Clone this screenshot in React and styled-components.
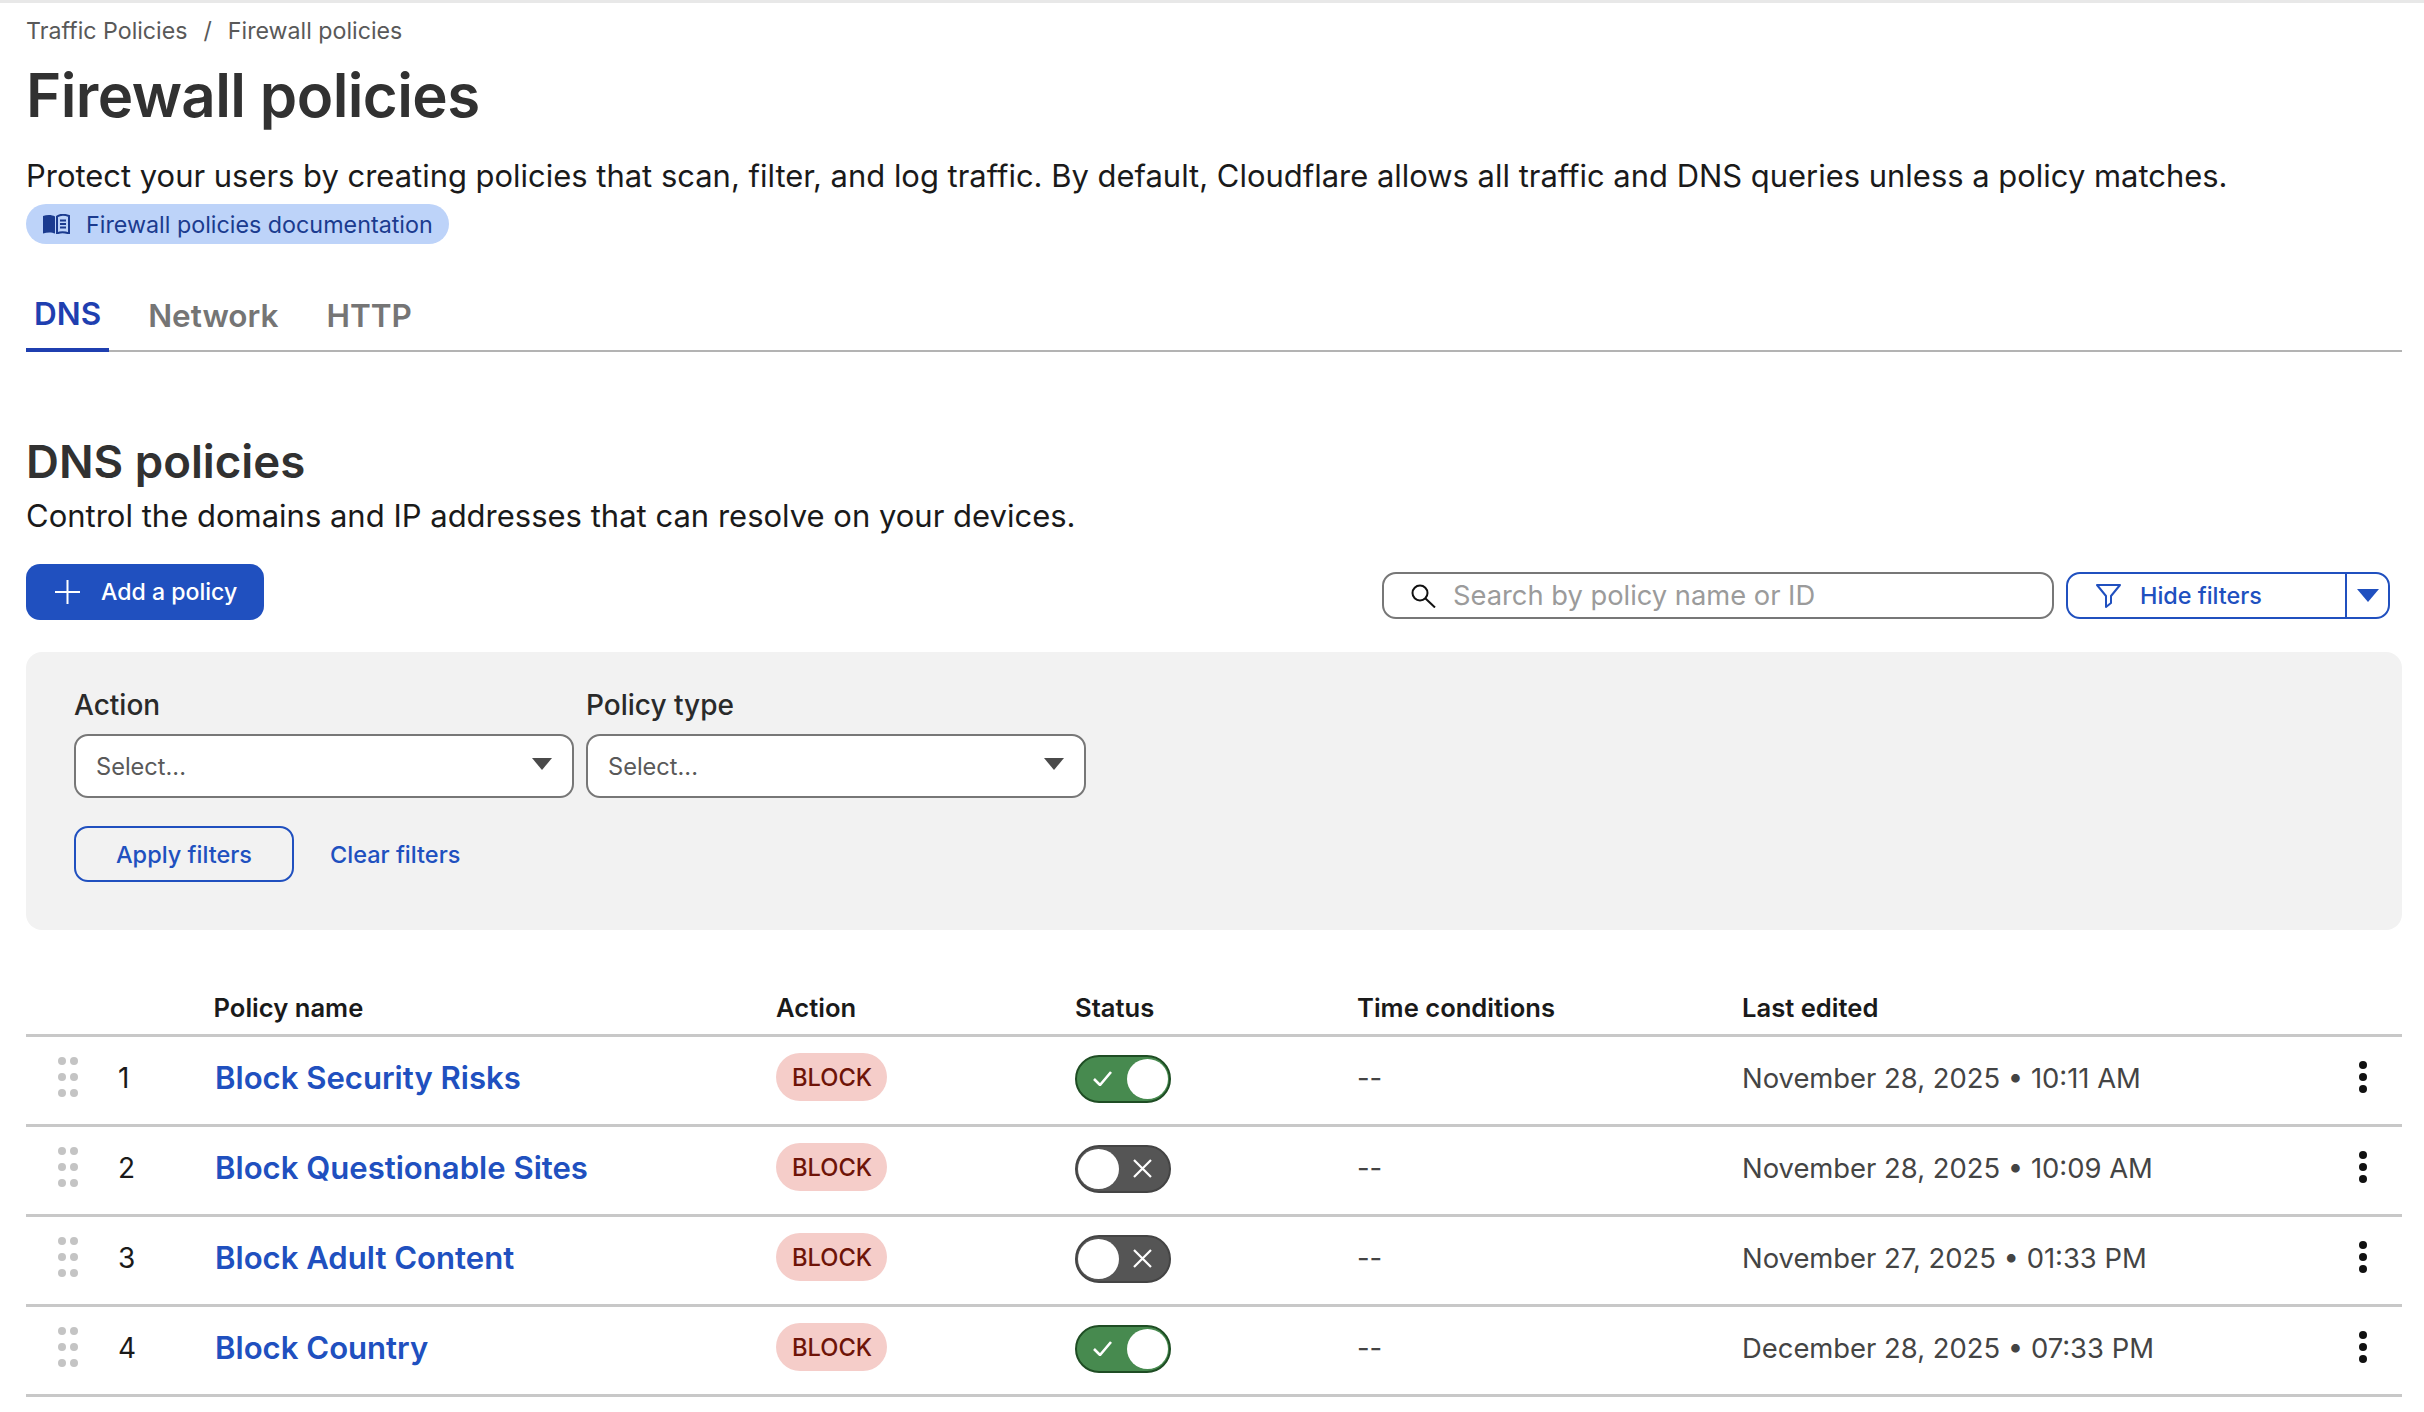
import React from "react";
import styled, { createGlobalStyle } from "styled-components";

const Global = createGlobalStyle`
  html, body { margin: 0; padding: 0; background: #fff; }
  body { font-family: Inter, "Liberation Sans", sans-serif; color: #313131; }
  * { box-sizing: border-box; }
`;

const Page = styled.div`
  width: 2424px;
  height: 1412px;
  overflow: hidden;
  padding: 0 22px 0 26px;
  border-top: 3px solid #e8e8e8;
`;
const Crumbs = styled.nav`
  display: flex;
  gap: 16px;
  height: 54px;
  padding-top: 13px;
  font-size: 23.2px;
  line-height: 30px;
  color: #595959;
`;
const Title = styled.h1`
  margin: 0;
  height: 70px;
  padding-top: 3px;
  font-size: 60px;
  line-height: 70px;
  font-weight: 600;
  letter-spacing: -0.6px;
  color: #313131;
`;
const Lead = styled.p`
  margin: 0;
  padding-top: 28px;
  height: 77px;
  font-size: 30.95px;
  line-height: 42px;
  color: #1a1a1a;
`;
const DocPill = styled.a`
  display: inline-flex;
  align-items: center;
  gap: 16px;
  height: 40px;
  padding: 0 16px;
  border-radius: 20px;
  background: #bdd3f9;
  color: #1b3b8f;
  font-size: 23.3px;
`;
const Tabs = styled.div`
  display: flex;
  height: 108px;
  padding-top: 46px;
  border-bottom: 2px solid #b3b3b3;
`;
const Tab = styled.div`
  height: 62px;
  padding: 0 8px;
  margin-right: ${(p) => (p.$active ? "31px" : "32px")};
  font-size: 31.5px;
  line-height: ${(p) => (p.$active ? "48px" : "52px")};
  font-weight: 600;
  color: ${(p) => (p.$active ? "#1f3fb0" : "#757575")};
  border-bottom: ${(p) => (p.$active ? "4px solid #1f3fb0" : "0")};
`;
const Heading = styled.h2`
  margin: 79px 0 0;
  height: 62px;
  font-size: 45.6px;
  line-height: 62px;
  font-weight: 600;
  color: #313131;
`;
const Sub = styled.p`
  margin: 0;
  height: 46px;
  font-size: 31px;
  line-height: 46px;
  color: #1a1a1a;
`;
const Toolbar = styled.div`
  display: flex;
  align-items: flex-start;
  height: 88px;
  margin-top: 25px;
  padding-right: 12px;
`;
const AddButton = styled.button`
  display: flex;
  align-items: center;
  gap: 21px;
  width: 238px;
  height: 56px;
  padding: 0 0 0 29px;
  border: 0;
  border-radius: 14px;
  background: #2050bf;
  color: #fff;
  white-space: nowrap;
  font: 500 23.1px Inter, sans-serif;
`;
const SearchBox = styled.div`
  display: flex;
  align-items: center;
  gap: 16px;
  width: 672px;
  height: 47px;
  margin: 8px 0 0 auto;
  padding: 0 24px 0 27px;
  border: 2px solid #777;
  border-radius: 14px;
  color: #9b9b9b;
  font-size: 27.3px;
`;
const SplitButton = styled.div`
  display: flex;
  width: 324px;
  height: 47px;
  margin: 8px 0 0 12px;
  border: 2px solid #2050bf;
  border-radius: 14px;
  color: #2050bf;
  font-size: 23.4px;
  font-weight: 500;
`;
const SplitMain = styled.div`
  flex: 1;
  display: flex;
  align-items: center;
  gap: 19px;
  padding-left: 28px;
  border-right: 2px solid #2050bf;
`;
const SplitCaret = styled.div`
  width: 41px;
  display: flex;
  align-items: center;
  justify-content: center;
`;
const Panel = styled.section`
  height: 278px;
  padding: 34px 48px 0;
  border-radius: 16px;
  background: #f2f2f2;
`;
const FieldRow = styled.div`
  display: flex;
  gap: 12px;
`;
const Field = styled.div`
  width: 500px;
`;
const FieldLabel = styled.div`
  height: 48px;
  font-size: 28px;
  line-height: 38px;
  font-weight: 500;
  color: #2a2a2a;
`;
const SelectBox = styled.div`
  display: flex;
  align-items: center;
  justify-content: space-between;
  height: 64px;
  padding: 0 20px 0 20px;
  border: 2px solid #777;
  border-radius: 14px;
  background: #fff;
  color: #595959;
  font-size: 23.6px;
`;
const SelectCaret = styled.span`
  display: flex;
  margin-top: -5px;
`;
const PanelActions = styled.div`
  display: flex;
  align-items: center;
  gap: 36px;
  margin-top: 28px;
`;
const OutlineButton = styled.button`
  width: 220px;
  height: 56px;
  border: 2px solid #2050bf;
  border-radius: 14px;
  background: transparent;
  color: #2050bf;
  font: 500 23.5px Inter, sans-serif;
`;
const TextLink = styled.a`
  color: #2050bf;
  font-size: 23.5px;
  font-weight: 500;
`;
const columns = "92px 98px 560px 299px 282px 385px 1fr 78px";
const HeadRow = styled.div`
  display: grid;
  grid-template-columns: ${columns};
  align-items: center;
  height: 107px;
  padding-top: 50px;
  border-bottom: 3px solid #c8c8c8;
  font-size: 25.6px;
  font-weight: 600;
  color: #1a1a1a;
`;
const HeadName = styled.div`
  margin-left: -2.5px;
`;
const Row = styled.div`
  display: grid;
  grid-template-columns: ${columns};
  align-items: center;
  height: 90px;
  padding-bottom: 5px;
  border-bottom: 3px solid #c8c8c8;
`;
const Grip = styled.div`
  display: grid;
  grid-template-columns: 8px 8px;
  gap: 8px 4px;
  width: 20px;
  margin-left: 32px;
  margin-top: -3px;
`;
const GripDot = styled.span`
  width: 8px;
  height: 8px;
  border-radius: 50%;
  background: #c4c4c4;
`;
const Num = styled.div`
  font-size: 28px;
  color: #1a1a1a;
`;
const PolicyLink = styled.a`
  margin-left: -1px;
  font-size: 31.1px;
  font-weight: 600;
  color: #2050bf;
`;
const Badge = styled.span`
  display: inline-flex;
  align-items: center;
  justify-content: center;
  width: 111px;
  height: 48px;
  margin-top: -2px;
  padding-left: 1px;
  border-radius: 24px;
  background: #f5cdc9;
  color: #6e1408;
  font-size: 23.7px;
  font-weight: 500;
`;
const Toggle = styled.div`
  display: flex;
  flex-direction: ${(p) => (p.$on ? "row" : "row-reverse")};
  align-items: center;
  justify-content: space-between;
  width: 96px;
  height: 48px;
  margin-top: 1px;
  padding: 0 ${(p) => (p.$on ? "1px" : "17px")} 0 ${(p) => (p.$on ? "16px" : "1px")};
  border: 2px solid ${(p) => (p.$on ? "#1f4d24" : "#444")};
  border-radius: 24px;
  background: ${(p) => (p.$on ? "#478a4f" : "#555")};
`;
const Knob = styled.span`
  width: 41px;
  height: 40px;
  border-radius: 50%;
  background: #fff;
`;
const Dim = styled.div`
  font-size: 27.4px;
  color: #444;
`;
const Kebab = styled.div`
  display: flex;
  flex-direction: column;
  gap: 4px;
  width: 8px;
  margin-left: 35px;
  margin-top: -2px;
`;
const KebabDot = styled.span`
  width: 8px;
  height: 8px;
  border-radius: 50%;
  background: #111;
`;

const rows = [
  ["1", "Block Security Risks", true, "November 28, 2025 • 10:11 AM"],
  ["2", "Block Questionable Sites", false, "November 28, 2025 • 10:09 AM"],
  ["3", "Block Adult Content", false, "November 27, 2025 • 01:33 PM"],
  ["4", "Block Country", true, "December 28, 2025 • 07:33 PM"],
];

const BookIcon = () => (
  <svg width="28" height="20" viewBox="0 0 28 20" fill="none">
    <path d="M1 2C5 .5 10 .5 13 2.500V19.500C10 18 5 18 1 19.500z" fill="#1b3b8f" />
    <path d="M15 2.500C18 .5 23 .5 27 2V19.500C23 18 18 18 15 19.500z" stroke="#1b3b8f" strokeWidth="2" />
    <path d="M18 6.500h6M18 10h6M18 13.500h6" stroke="#1b3b8f" strokeWidth="1.800" />
  </svg>
);
const PlusIcon = () => (
  <svg width="25" height="24" viewBox="0 0 25 24" style={{ flexShrink: 0 }}>
    <path d="M12.500 0v24M0 12h25" stroke="#fff" strokeWidth="2" />
  </svg>
);
const SearchIcon = () => (
  <svg width="26" height="24" viewBox="0 0 26 24" fill="none">
    <circle cx="9" cy="9" r="7.500" stroke="#111" strokeWidth="2" />
    <path d="M14.500 14.500l9.500 9" stroke="#111" strokeWidth="2" />
  </svg>
);
const FunnelIcon = () => (
  <svg width="25" height="24" viewBox="0 0 25 24" fill="none">
    <path d="M1 1h23l-9 11v7l-5 4V12z" stroke="#2050bf" strokeWidth="2" strokeLinejoin="round" />
  </svg>
);
const Caret = ({ color, w = 22, h = 13 }) => (
  <svg width={w} height={h} viewBox="0 0 22 13">
    <path d="M0 0h22L11 13z" fill={color} />
  </svg>
);
const CheckIcon = () => (
  <svg width="19" height="15" viewBox="0 0 19 15" fill="none">
    <path d="M1 8l6 6L18 1" stroke="#fff" strokeWidth="2.600" />
  </svg>
);
const CrossIcon = () => (
  <svg width="19" height="19" viewBox="0 0 19 19" fill="none">
    <path d="M1 1l17 17M18 1L1 18" stroke="#fff" strokeWidth="2.200" />
  </svg>
);

export default function App() {
  return (
    <Page>
      <Global />
      <Crumbs>
        <span>Traffic Policies</span>
        <span>/</span>
        <span>Firewall policies</span>
      </Crumbs>
      <Title>Firewall policies</Title>
      <Lead>
        Protect your users by creating policies that scan, filter, and log traffic. By default, Cloudflare allows all
        traffic and DNS queries unless a policy matches.
      </Lead>
      <DocPill>
        <BookIcon />
        Firewall policies documentation
      </DocPill>
      <Tabs>
        <Tab $active>DNS</Tab>
        <Tab>Network</Tab>
        <Tab>HTTP</Tab>
      </Tabs>
      <Heading>DNS policies</Heading>
      <Sub>Control the domains and IP addresses that can resolve on your devices.</Sub>
      <Toolbar>
        <AddButton>
          <PlusIcon />
          Add a policy
        </AddButton>
        <SearchBox>
          <SearchIcon />
          Search by policy name or ID
        </SearchBox>
        <SplitButton>
          <SplitMain>
            <FunnelIcon />
            Hide filters
          </SplitMain>
          <SplitCaret>
            <Caret color="#2050bf" />
          </SplitCaret>
        </SplitButton>
      </Toolbar>
      <Panel>
        <FieldRow>
          <Field>
            <FieldLabel>Action</FieldLabel>
            <SelectBox>
              Select...
              <SelectCaret>
                <Caret color="#4a4a4a" w={20} h={12} />
              </SelectCaret>
            </SelectBox>
          </Field>
          <Field>
            <FieldLabel>Policy type</FieldLabel>
            <SelectBox>
              Select...
              <SelectCaret>
                <Caret color="#4a4a4a" w={20} h={12} />
              </SelectCaret>
            </SelectBox>
          </Field>
        </FieldRow>
        <PanelActions>
          <OutlineButton>Apply filters</OutlineButton>
          <TextLink>Clear filters</TextLink>
        </PanelActions>
      </Panel>
      <HeadRow>
        <div />
        <div />
        <HeadName>Policy name</HeadName>
        <div>Action</div>
        <div>Status</div>
        <div>Time conditions</div>
        <div>Last edited</div>
        <div />
      </HeadRow>
      {rows.map(([n, name, on, date]) => (
        <Row key={n}>
          <Grip>
            {[0, 1, 2, 3, 4, 5].map((i) => (
              <GripDot key={i} />
            ))}
          </Grip>
          <Num>{n}</Num>
          <PolicyLink>{name}</PolicyLink>
          <div>
            <Badge>BLOCK</Badge>
          </div>
          <Toggle $on={on}>
            {on ? <CheckIcon /> : <CrossIcon />}
            <Knob />
          </Toggle>
          <Dim>--</Dim>
          <Dim>{date}</Dim>
          <Kebab>
            <KebabDot />
            <KebabDot />
            <KebabDot />
          </Kebab>
        </Row>
      ))}
    </Page>
  );
}
